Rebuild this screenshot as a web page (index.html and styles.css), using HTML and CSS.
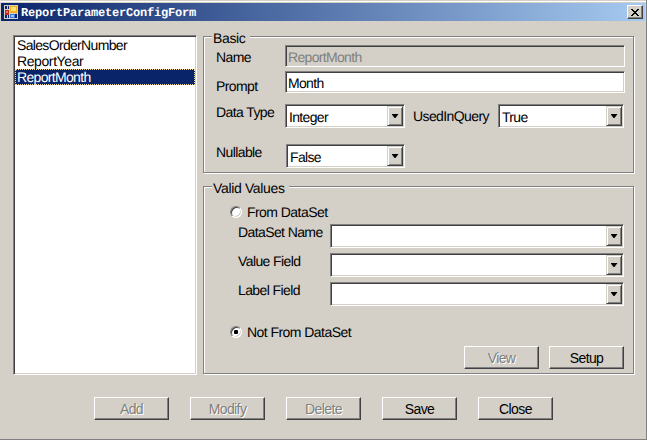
FILE: index.html
```
<!DOCTYPE html>
<html lang="en">
<head>
<meta charset="utf-8">
<title>ReportParameterConfigForm</title>
<link rel="stylesheet" href="styles.css">
</head>
<body>
<div class="window">
  <header class="titlebar">
    <svg class="app-icon" width="14" height="14" viewBox="0 0 14 14" shape-rendering="crispEdges">
      <path fill="#d4d0c8" d="M0 0h14v14H0z"/>
      <path fill="#0a246a" d="M1 1h4v3H1zM1 10h4v3H1zM11 9h2v4h-2z"/>
      <path fill="#d4d0c8" d="M3 1h1v3H3zM3 10h1v3H3z"/>
      <path fill="#c42818" d="M1 5h4v5H1z"/><path fill="#f07860" d="M2 6h2v2H2z"/>
      <path fill="#f0b020" d="M6 1h7v7H6z"/><path fill="#ffe078" d="M7 2h5v4H7z"/>
      <path fill="#3c78d8" d="M6 9h5v4H6z"/><path fill="#98c0ff" d="M7 10h3v2H7z"/>
    </svg>
    <h1 class="title">ReportParameterConfigForm</h1>
    <button class="close" aria-label="Close window"><svg width="8" height="7" viewBox="0 0 8 7" shape-rendering="crispEdges"><path d="M0 0h2v1H0zM6 0h2v1H6zM1 1h2v1H1zM5 1h2v1H5zM2 2h4v1H2zM3 3h2v1H3zM2 4h4v1H2zM1 5h2v1H1zM5 5h2v1H5zM0 6h2v1H0zM6 6h2v1H6z"/></svg></button>
  </header>
  <main class="content">
    <ul class="list sunken">
      <li>SalesOrderNumber</li>
      <li class="looser">ReportYear</li>
      <li class="selected">ReportMonth</li>
    </ul>
    <div class="groups">
      <section class="group basic">
        <h2 class="legend">Basic</h2>
        <div class="row name-row"><span class="label">Name</span><div class="field sunken disabled">ReportMonth</div></div>
        <div class="row prompt-row"><span class="label">Prompt</span><div class="field sunken">Month</div></div>
        <div class="row type-row"><span class="label">Data Type</span>
          <div class="combo sunken type"><span>Integer</span><i class="arrow"></i></div>
          <span class="label query-label">UsedInQuery</span>
          <div class="combo sunken query"><span>True</span><i class="arrow"></i></div>
        </div>
        <div class="row null-row"><span class="label">Nullable</span><div class="combo sunken nullable"><span>False</span><i class="arrow"></i></div></div>
      </section>
      <section class="group values">
        <h2 class="legend">Valid Values</h2>
        <div class="option"><i class="radio"></i><span>From DataSet</span></div>
        <div class="sources">
          <div class="row"><span class="label">DataSet Name</span><div class="combo sunken"><span></span><i class="arrow"></i></div></div>
          <div class="row"><span class="label">Value Field</span><div class="combo sunken"><span></span><i class="arrow"></i></div></div>
          <div class="row"><span class="label">Label Field</span><div class="combo sunken"><span></span><i class="arrow"></i></div></div>
        </div>
        <div class="option second"><i class="radio checked"></i><span>Not From DataSet</span></div>
        <div class="group-actions"><button class="btn" disabled>View</button><button class="btn">Setup</button></div>
      </section>
    </div>
  </main>
  <footer class="actions">
    <button class="btn" disabled>Add</button>
    <button class="btn" disabled>Modify</button>
    <button class="btn" disabled>Delete</button>
    <button class="btn">Save</button>
    <button class="btn">Close</button>
  </footer>
</div>
</body>
</html>
```
FILE: styles.css
```
* { box-sizing: border-box; }
body { margin: 0; background: #d4d0c8; color: #000; font: 14px/16px "Liberation Sans", sans-serif; letter-spacing: -0.67px; text-rendering: geometricPrecision; overflow: hidden; }
h1, h2, ul { margin: 0; padding: 0; font: inherit; list-style: none; }
button { font: inherit; padding: 0; margin: 0; color: #000; }
.window { width: 647px; height: 440px; padding: 3px 1px 0; background: #d4d0c8; border-right: 1px solid #808080; border-bottom: 1px solid #808080; box-shadow: inset 0 1px #d4d0c8, inset 0 2px #fff; white-space: nowrap; }
.titlebar { height: 18px; display: flex; align-items: center; padding: 0 2px 0 3px; background: linear-gradient(90deg, #0a246a, #a6caf0); }
.app-icon { flex: none; }
.title { flex: 1; margin: 2px 0 0 3px; color: #fff; font: bold 12px/16px "Liberation Mono", monospace; letter-spacing: -0.2px; }
.close { width: 16px; height: 14px; display: flex; align-items: center; justify-content: center; background: #d4d0c8; border: 1px solid; border-color: #fff #404040 #404040 #fff; box-shadow: inset -1px -1px #808080; }
.content { display: flex; padding: 14px 0 0 12px; }
.sunken { border: 1px solid; border-color: #808080 #fff #fff #808080; box-shadow: inset 1px 1px #404040, inset -1px -1px #d4d0c8; background: #fff; }
.list { width: 184px; height: 340px; padding: 1px; }
.list li { height: 16px; padding-left: 2px; line-height: 17px; }
.list .looser { letter-spacing: -0.4px; }
.list .selected { background: #0a246a; color: #fff; outline: 1px dotted #f5db95; outline-offset: -1px; }
.groups { margin: 1px 0 0 6px; width: 431px; }
.group { position: relative; border: 1px solid #808080; box-shadow: 1px 1px #fff, inset 1px 1px #fff; }
.basic { height: 137px; padding: 8px 8px 0 12px; }
.values { height: 188px; margin-top: 13px; padding: 18px 9px 0 26px; }
.legend { position: absolute; left: 8px; top: -7px; padding: 0 4px 0 1px; background: #d4d0c8; letter-spacing: -0.35px; }
.row { display: flex; align-items: flex-start; }
.label { width: 69px; flex: none; letter-spacing: -0.6px; }
.name-row .label { margin-top: 4px; }
.prompt-row { height: 22px; margin-top: 4px; }
.prompt-row .label { margin-top: 7px; }
.type-row { margin-top: 11px; }
.null-row { margin-top: 16px; }
.field { flex: 1; height: 22px; padding-left: 2px; line-height: 22px; }
.disabled { background: #d4d0c8; color: #808080; }
.combo { height: 24px; padding: 1px; display: flex; flex: 1; }
.combo span { flex: 1; padding-left: 2px; line-height: 22px; }
.type { flex: none; width: 120px; }
.nullable { flex: none; width: 119px; margin-left: 1px; }
.query { flex: none; width: 126px; }
.query-label { width: 85px; margin: 4px 0 0 8px; }
.arrow { width: 16px; height: 20px; flex: none; display: flex; align-items: center; justify-content: center; background: #d4d0c8; border: 1px solid; border-color: #d4d0c8 #404040 #404040 #d4d0c8; box-shadow: inset 1px 1px #fff, inset -1px -1px #808080; }
.arrow::after { content: ""; width: 7px; height: 4px; background: #000; clip-path: polygon(0 0, 100% 0, 57% 100%, 43% 100%); }
.option { display: flex; align-items: center; height: 14px; letter-spacing: -0.55px; }
.radio { width: 12px; height: 12px; margin-right: 5px; border-radius: 50%; border: 1px solid; border-color: #808080 #fff #fff #808080; background: #fff; box-shadow: inset 1px 1px #404040, inset -1px -1px #d4d0c8; display: flex; align-items: center; justify-content: center; }
.checked::after { content: ""; width: 4px; height: 4px; border-radius: 1px; background: #000; }
.sources { display: grid; gap: 5px; padding-left: 8px; margin-top: 5px; }
.sources .label { width: 92px; }
.second { margin-top: 19px; }
.group-actions { display: flex; gap: 10px; justify-content: flex-end; margin-top: 7px; }
.btn { width: 75px; height: 23px; letter-spacing: -0.6px; background: #d4d0c8; border: 1px solid; border-color: #fff #404040 #404040 #fff; box-shadow: inset -1px -1px #808080; border-radius: 0; }
.btn:disabled { color: #808080; text-shadow: 1px 1px #fff; }
.actions { display: flex; gap: 21px; padding: 22px 0 0 93px; }
```
